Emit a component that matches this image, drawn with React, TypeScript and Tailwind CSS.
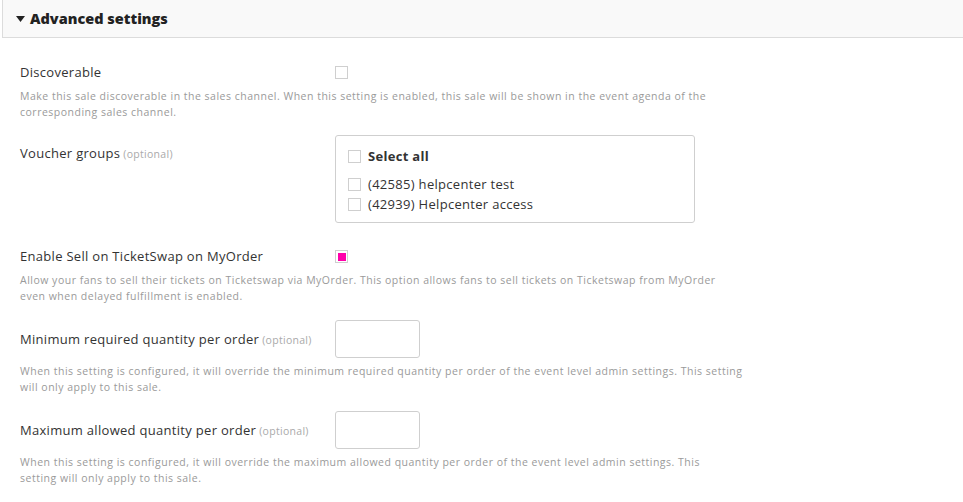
import React from "react"

const font = { fontFamily: "'Open Sans', 'Liberation Sans', sans-serif" }

function Checkbox({ checked = false }: { checked?: boolean }) {
  return (
    <span className="flex h-[13px] w-[13px] shrink-0 items-center justify-center border border-[#cfcfcf] bg-white">
      {checked && <span className="h-[8px] w-[8px] bg-[#ff00aa]" />}
    </span>
  )
}

function Optional() {
  return <span className="text-[10.5px] tracking-[0.3px] text-[#aaa]"> (optional)</span>
}

function Desc({ children }: { children: React.ReactNode }) {
  return <p className="whitespace-nowrap text-[10.5px] leading-[16px] tracking-[0.5px] text-[#9a9a9a]">{children}</p>
}

export default function App() {
  return (
    <div className="min-h-screen bg-white text-[#333]" style={font}>
      <div className="ml-[2px] flex h-[38px] items-center border-b border-l border-[#dcdcdc] bg-[#f9f9f9] pl-[13px]">
        <svg width="9" height="6" viewBox="0 0 9 6" className="mr-[5px]">
          <path d="M0 0h9L4.5 6z" fill="#222" />
        </svg>
        <h2 className="text-[14.5px] font-extrabold text-[#222]">Advanced settings</h2>
      </div>

      <div className="pl-5 text-[13px] tracking-[0.3px]">
        {/* Discoverable */}
        <div className="mt-[28px] grid grid-cols-[315px_1fr] items-center">
          <span className="leading-[13px]">Discoverable</span>
          <Checkbox />
        </div>
        <div className="mt-[9px]">
          <Desc>
            Make this sale discoverable in the sales channel. When this setting is enabled, this sale will be shown in the event agenda of the
            <br />
            corresponding sales channel.
          </Desc>
        </div>

        {/* Voucher groups */}
        <div className="mt-[15px] grid grid-cols-[315px_1fr] items-start">
          <span className="mt-[10px] leading-[16px]">
            Voucher groups<Optional />
          </span>
          <div className="flex h-[88px] w-[360px] flex-col rounded-[3px] border border-[#cfcfcf] px-[12px] pt-[12px]">
            <label className="flex items-center gap-[7px]">
              <Checkbox />
              <span className="font-bold leading-[16px]">Select all</span>
            </label>
            <label className="mt-[12px] flex items-center gap-[7px]">
              <Checkbox />
              <span className="leading-[16px]">(42585) helpcenter test</span>
            </label>
            <label className="mt-[4px] flex items-center gap-[7px]">
              <Checkbox />
              <span className="leading-[16px]">(42939) Helpcenter access</span>
            </label>
          </div>
        </div>

        {/* TicketSwap */}
        <div className="mt-[27px] grid grid-cols-[315px_1fr] items-center">
          <span className="leading-[13px]">Enable Sell on TicketSwap on MyOrder</span>
          <Checkbox checked />
        </div>
        <div className="mt-[9px]">
          <Desc>
            Allow your fans to sell their tickets on Ticketswap via MyOrder. This option allows fans to sell tickets on Ticketswap from MyOrder
            <br />
            even when delayed fulfillment is enabled.
          </Desc>
        </div>

        {/* Minimum */}
        <div className="mt-[16px] grid grid-cols-[315px_1fr] items-center">
          <span className="leading-[16px]">
            Minimum required quantity per order<Optional />
          </span>
          <input className="h-[38px] w-[85px] rounded-[3px] border border-[#cfcfcf] outline-none" />
        </div>
        <div className="mt-[5px]">
          <Desc>
            When this setting is configured, it will override the minimum required quantity per order of the event level admin settings. This setting
            <br />
            will only apply to this sale.
          </Desc>
        </div>

        {/* Maximum */}
        <div className="mt-[16px] grid grid-cols-[315px_1fr] items-center">
          <span className="leading-[16px]">
            Maximum allowed quantity per order<Optional />
          </span>
          <input className="h-[38px] w-[85px] rounded-[3px] border border-[#cfcfcf] outline-none" />
        </div>
        <div className="mt-[5px]">
          <Desc>
            When this setting is configured, it will override the maximum allowed quantity per order of the event level admin settings. This
            <br />
            setting will only apply to this sale.
          </Desc>
        </div>
      </div>
    </div>
  )
}
